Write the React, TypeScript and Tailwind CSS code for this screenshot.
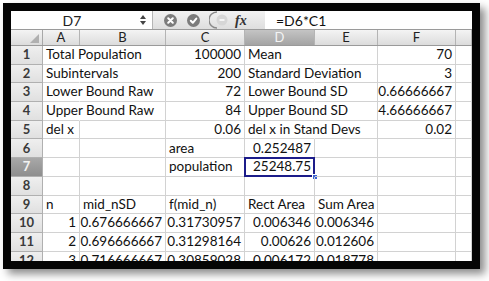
import React from 'react';

type Cell = { t?: string; r?: boolean; merge?: boolean };

const colW = ['w-[37px]', 'w-[86px]', 'w-[79px]', 'w-[70px]', 'w-[63px]', 'w-[78px]', 'flex-1'];
const colLabels = ['A', 'B', 'C', 'D', 'E', 'F', ''];

// merge = no gridline on the right side of the cell
const rows: Cell[][] = [
  [{ t: 'Total Population', merge: true }, {}, { t: '100000', r: true }, { t: 'Mean', merge: true }, {}, { t: '70', r: true }, {}],
  [{ t: 'Subintervals', merge: true }, {}, { t: '200', r: true }, { t: 'Standard Deviation', merge: true }, {}, { t: '3', r: true }, {}],
  [{ t: 'Lower Bound Raw', merge: true }, {}, { t: '72', r: true }, { t: 'Lower Bound SD', merge: true }, {}, { t: '0.66666667', r: true }, {}],
  [{ t: 'Upper Bound Raw', merge: true }, {}, { t: '84', r: true }, { t: 'Upper Bound SD', merge: true }, {}, { t: '4.66666667', r: true }, {}],
  [{ t: 'del x' }, {}, { t: '0.06', r: true }, { t: 'del x in Stand Devs', merge: true }, {}, { t: '0.02', r: true }, {}],
  [{}, {}, { t: 'area' }, { t: '0.252487', r: true }, {}, {}, {}],
  [{}, {}, { t: 'population' }, { t: '25248.75', r: true }, {}, {}, {}],
  [{}, {}, {}, {}, {}, {}, {}],
  [{ t: 'n' }, { t: 'mid_nSD' }, { t: 'f(mid_n)' }, { t: 'Rect Area' }, { t: 'Sum Area' }, {}, {}],
  [{ t: '1', r: true }, { t: '0.676666667', r: true }, { t: '0.31730957', r: true }, { t: '0.006346', r: true }, { t: '0.006346', r: true }, {}, {}],
  [{ t: '2', r: true }, { t: '0.696666667', r: true }, { t: '0.31298164', r: true }, { t: '0.00626', r: true }, { t: '0.012606', r: true }, {}, {}],
  [{ t: '3', r: true }, { t: '0.716666667', r: true }, { t: '0.30859028', r: true }, { t: '0.006172', r: true }, { t: '0.018778', r: true }, {}, {}],
];

const FormulaBar = () => (
  <div className="flex h-[19px] shrink-0 border-b border-[#9a9a9a]">
    <div className="flex w-[122px] items-center justify-center bg-white text-[14px] text-[#222]">D7</div>
    <div className="flex w-[20px] flex-col items-center justify-center gap-[2px] border-r border-[#b5b5b5] bg-white">
      <span className="h-0 w-0 border-x-[3px] border-b-[4px] border-x-transparent border-b-[#444]" />
      <span className="h-0 w-0 border-x-[3px] border-t-[4px] border-x-transparent border-t-[#444]" />
    </div>
    <div className="flex w-[112px] items-center bg-gradient-to-b from-[#f2f2f2] to-[#dedede] pl-[11px]">
      <svg width="13" height="13" viewBox="0 0 13 13">
        <circle cx="6.5" cy="6.5" r="6.5" fill="#7c7c7c" />
        <path d="M4.2 4.2 L8.8 8.8 M8.8 4.2 L4.2 8.8" stroke="#fff" strokeWidth="2" strokeLinecap="round" />
      </svg>
      <svg className="ml-[10px]" width="13" height="13" viewBox="0 0 13 13">
        <circle cx="6.5" cy="6.5" r="6.5" fill="#7c7c7c" />
        <path d="M3.8 6.8 L5.8 8.8 L9.3 4.6" stroke="#fff" strokeWidth="2" fill="none" strokeLinecap="round" strokeLinejoin="round" />
      </svg>
      <svg className="ml-[9px]" width="22" height="18" viewBox="0 0 22 18">
        <path d="M8 1 A8 8 0 0 0 8 17" stroke="#8a8a8a" strokeWidth="1.4" fill="none" />
        <circle cx="13" cy="9" r="5.5" fill="#d6d6d6" />
        <path d="M10.5 9 H15.5" stroke="#f5f5f5" strokeWidth="2" />
      </svg>
      <span className="ml-[4px] font-['Liberation_Serif',serif] text-[14px] font-bold italic text-[#333]">fx</span>
    </div>
    <div className="flex flex-1 items-center bg-white pl-[11px] text-[14px] text-[#111]">=D6*C1</div>
  </div>
);

const HeaderRow = () => (
  <div className="flex h-[16px] shrink-0 border-b border-[#9a9a9a]">
    <div className="relative w-[32px] shrink-0 border-r border-[#a8a8a8] bg-gradient-to-b from-[#f4f4f4] to-[#dcdcdc]">
      <svg className="absolute bottom-[2px] right-[3px]" width="9" height="9" viewBox="0 0 9 9">
        <path d="M9 0 L9 9 L0 9 Z" fill="#b0b0b0" />
      </svg>
    </div>
    {colLabels.map((c, i) => (
      <div
        key={i}
        className={`${colW[i]} flex shrink-0 items-center justify-center border-r border-[#b4b4b4] text-[13px] leading-none ${
          c === 'D'
            ? 'bg-gradient-to-b from-[#c4c4c4] to-[#a4a4a4] text-[#f4f4f4]'
            : 'bg-gradient-to-b from-[#f4f4f4] to-[#dcdcdc] text-[#222]'
        }`}
      >
        {c}
      </div>
    ))}
  </div>
);

const Row = ({ n, cells }: { n: number; cells: Cell[] }) => (
  <div className="flex h-[18.7px] shrink-0">
    <div
      className={`flex w-[32px] shrink-0 items-center justify-center border-b border-r border-[#b0b0b0] text-[13px] font-bold ${
        n === 7 ? 'bg-gradient-to-b from-[#a8a8a8] to-[#8e8e8e] text-[#f2f2f2]' : 'bg-gradient-to-b from-[#efefef] to-[#e0e0e0] text-[#3a3a3a]'
      }`}
    >
      {n}
    </div>
    {cells.map((c, i) => (
      <div
        key={i}
        className={`${colW[i]} relative flex shrink-0 items-center overflow-visible whitespace-nowrap border-b border-[#d2d2d2] px-[3px] text-[13.5px] leading-none text-[#111] ${
          c.merge ? 'border-r border-r-transparent' : 'border-r'
        } ${c.r ? 'justify-end' : 'justify-start'}`}
      >
        <span className={c.merge ? 'relative z-10' : ''}>{c.t}</span>
        {n === 7 && i === 3 && (
          <>
            <span className="pointer-events-none absolute inset-[-1px] border-2 border-[#1c1c8a]" />
            <span className="absolute bottom-[-4px] right-[-4px] h-[6px] w-[6px] border border-white bg-[#3b63d6]" />
          </>
        )}
      </div>
    ))}
  </div>
);

export default function App() {
  return (
    <div className="h-[281px] w-[489px] overflow-hidden bg-white pl-[3px] pt-[3px] font-['Lato',sans-serif]">
      <div className="flex h-[266px] w-[477px] flex-col overflow-hidden border-[8px] border-[#050505] bg-white shadow-[5px_5px_8px_rgba(0,0,0,0.45)]">
        <FormulaBar />
        <HeaderRow />
        {rows.map((cells, i) => (
          <Row key={i} n={i + 1} cells={cells} />
        ))}
      </div>
    </div>
  );
}
